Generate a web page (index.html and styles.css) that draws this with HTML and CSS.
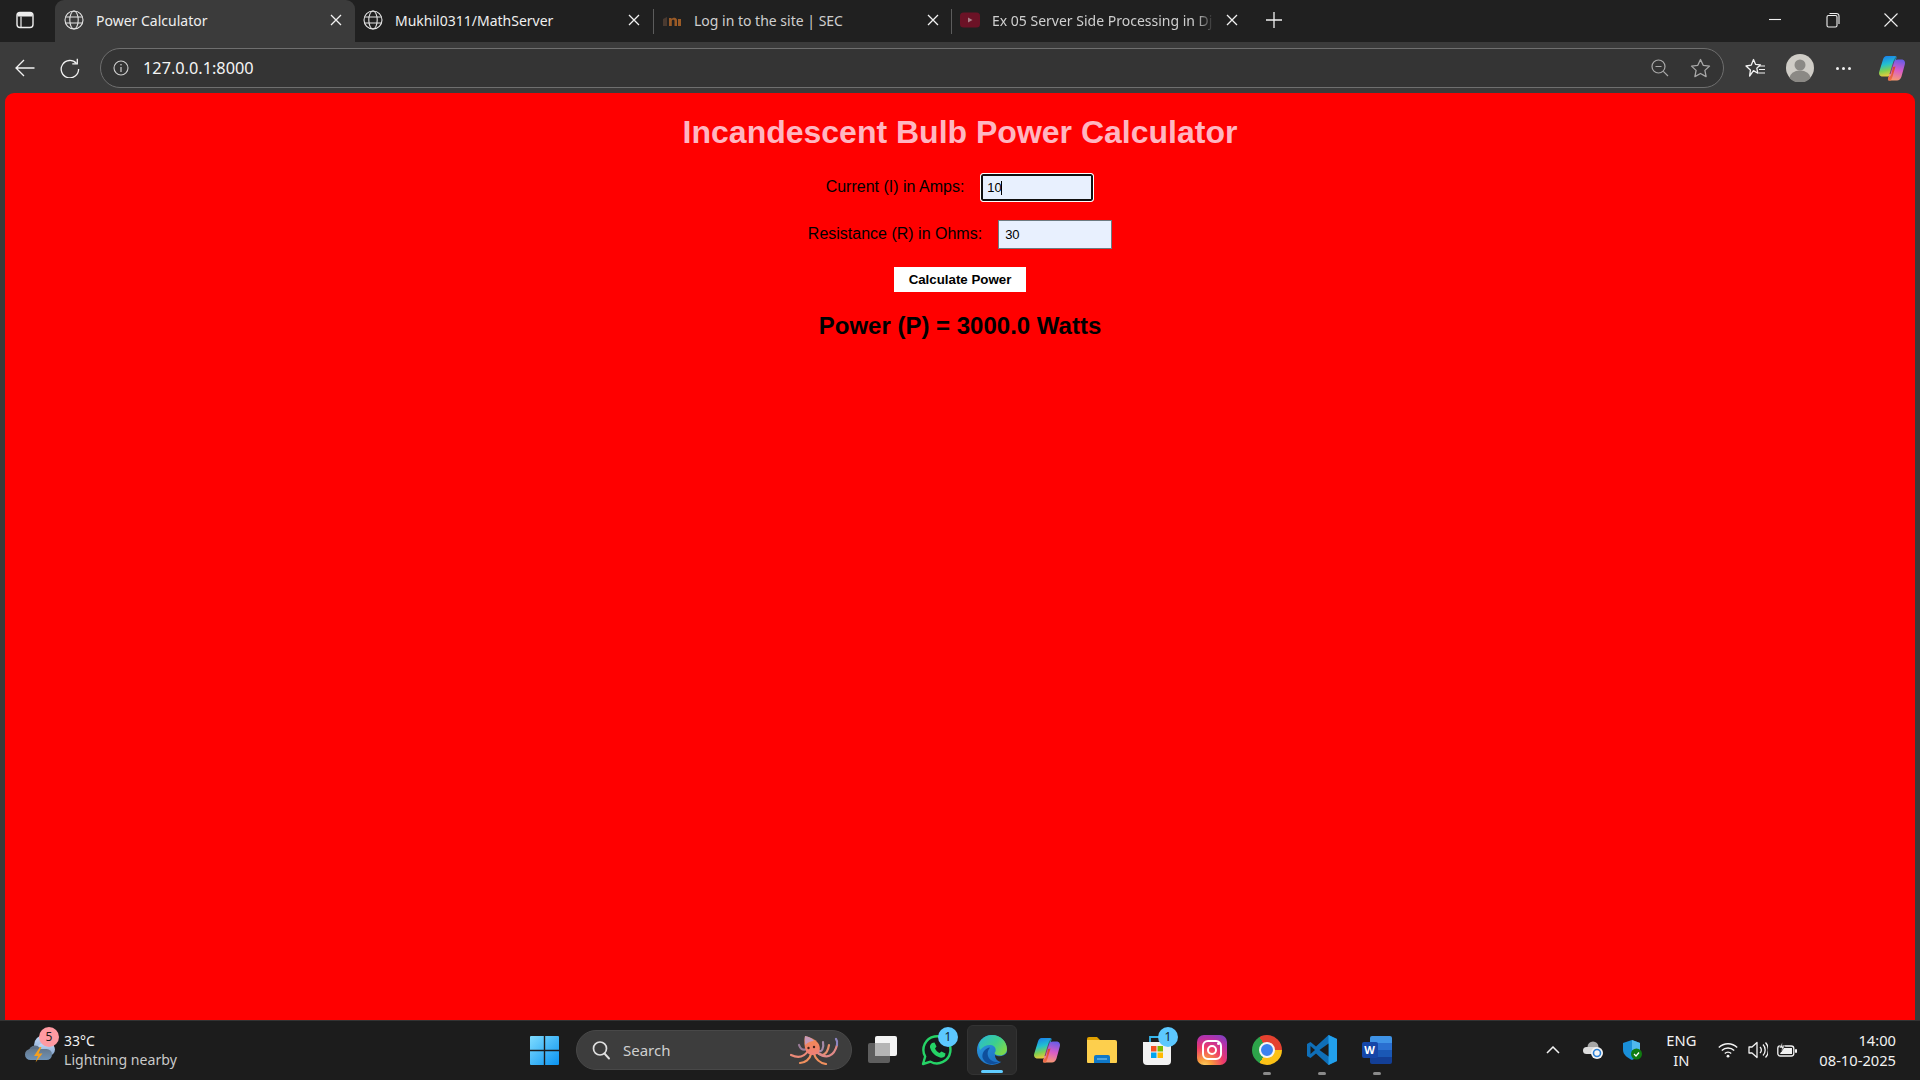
FILE: index.html
```html
<!DOCTYPE html>
<html lang="en">
<head>
  <meta charset="UTF-8">
  <title>Power Calculator</title>
  <link rel="stylesheet" href="styles.css">
</head>
<body>
  <svg class="defs" width="0" height="0">
    <defs>
      <linearGradient id="cp1" x1="0.3" y1="0" x2="0.5" y2="1"><stop offset="0" stop-color="#1a7fec"/><stop offset=".4" stop-color="#22c0d0"/><stop offset=".7" stop-color="#7fd050"/><stop offset="1" stop-color="#f6c83a"/></linearGradient>
      <linearGradient id="cp2" x1="0.6" y1="0" x2="0.4" y2="1"><stop offset="0" stop-color="#6a5ce6"/><stop offset=".5" stop-color="#d85cc8"/><stop offset="1" stop-color="#f89a70"/></linearGradient>
      <linearGradient id="cp3" x1="0" y1="0" x2="0" y2="1"><stop offset="0" stop-color="#d8402f"/><stop offset="1" stop-color="#f0704a"/></linearGradient>
    </defs>
    <symbol id="globe" viewBox="0 0 20 20">
      <g fill="none" stroke="#e4e4e4" stroke-width="1.1">
        <circle cx="10" cy="10" r="9"/>
        <ellipse cx="10" cy="10" rx="4.2" ry="9"/>
        <path d="M1.6 7h16.800M1.600 13h16.800"/>
      </g>
    </symbol>
    <symbol id="close" viewBox="0 0 12 12">
      <path d="M1 1l10 10M11 1L1 11" fill="none" stroke="#f2f2f2" stroke-width="1.3"/>
    </symbol>
    <symbol id="copilot-mark" viewBox="0 0 28 28">
      <path d="M8.500 2H17c1.200 0 1.800.8 1.500 1.800L14 19c-.8 2.500-2.500 3.500-4.500 3.500h-5C1.800 22.500.4 20.300 1.300 17.500L5 5.500C5.700 3.200 6.800 2 8.500 2z" fill="url(#cp1)"/>
      <path d="M20 5.500h3.500c2.700 0 4.100 2.200 3.300 5L23.500 22.500C22.700 25 21 26.500 19 26.500H11.500c-1.200 0-1.800-.8-1.500-1.800L15 9c.8-2.500 2.800-3.500 5-3.500z" fill="url(#cp2)"/>
      <path d="M15 13l2.500-.5-2.500 8.500c-.7 2.500-1.500 4-2 5.500h-1.500c-1.200 0-1.800-.8-1.500-1.800l.5-1.700c1.500-.2 2.400-1.200 2.900-2.800z" fill="url(#cp3)"/>
      <path d="M17.800 3.500l-1.800 3.500-4 13" fill="none" stroke="#2a2a2a" stroke-opacity=".55" stroke-width="1"/>
    </symbol>
  </svg>

  <div class="tabstrip">
    <div class="sidebtn">
      <svg width="18" height="18" viewBox="0 0 18 18"><rect x="1" y="1.500" width="16" height="15" rx="3" fill="none" stroke="#eee" stroke-width="1.400"/><path d="M1.500 5.500V4a2.500 2.500 0 0 1 2.500-2.500h10A2.500 2.500 0 0 1 16.500 4v1.500z" fill="#eee"/><path d="M5 5.500v11" stroke="#eee" stroke-width="1.200"/></svg>
    </div>
    <div class="tab tab-active">
      <svg class="favicon" width="20" height="20"><use href="#globe"/></svg>
      <span class="tab-title">Power Calculator</span>
      <svg class="tab-close" width="12" height="12"><use href="#close"/></svg>
    </div>
    <div class="tab tab-second">
      <svg class="favicon" width="20" height="20"><use href="#globe"/></svg>
      <span class="tab-title">Mukhil0311/MathServer</span>
      <svg class="tab-close" width="12" height="12"><use href="#close"/></svg>
    </div>
    <div class="tab tab-sep">
      <svg class="favicon" width="20" height="20" viewBox="0 0 20 20"><path d="M1 9l4-2v9H1z" fill="#4a3a30"/><path d="M7 16V8h2.500v1.200C10.500 8 12 7.500 13.500 8c1 .4 1.500 1.300 1.500 2.500V16h-2.500v-5c0-.8-.5-1.200-1.200-1.200S9.800 10.200 9.800 11v5z" fill="#9a5a26"/><path d="M16 9h3v7h-3z" fill="#9a5a26"/></svg>
      <span class="tab-title tab-dim">Log in to the site | SEC</span>
      <svg class="tab-close" width="12" height="12"><use href="#close"/></svg>
    </div>
    <div class="tab tab-sep tab-last">
      <svg class="favicon" width="20" height="20" viewBox="0 0 20 20"><rect y="2.500" width="20" height="15" rx="3.500" fill="#6b1226"/><path d="M8 7.500l4.500 2.500L8 12.500z" fill="#a88088"/></svg>
      <span class="tab-title tab-dim tab-fade">Ex 05 Server Side Processing in Dj</span>
      <svg class="tab-close" width="12" height="12"><use href="#close"/></svg>
    </div>
    <div class="newtab">
      <svg width="18" height="18" viewBox="0 0 18 18"><path d="M9 1v16M1 9h16" stroke="#f0f0f0" stroke-width="1.300" fill="none"/></svg>
    </div>
    <div class="winctrls">
      <svg width="14" height="14" viewBox="0 0 14 14"><path d="M1 6.500h12" stroke="#f0f0f0" stroke-width="1.100"/></svg>
      <svg width="14" height="16" viewBox="0 0 14 16"><rect x="1" y="3.500" width="10" height="11.500" rx="1.500" fill="none" stroke="#f0f0f0" stroke-width="1.100"/><path d="M3.500 1.500h7a2.500 2.500 0 0 1 2.500 2.500v8" fill="none" stroke="#f0f0f0" stroke-width="1.100"/></svg>
      <svg width="14" height="14" viewBox="0 0 14 14"><path d="M.5 .5l13 13M13.500 .5l-13 13" stroke="#f0f0f0" stroke-width="1.100"/></svg>
    </div>
  </div>

  <div class="toolbar">
    <svg class="tool-back" width="20" height="18" viewBox="0 0 20 18"><path d="M19.500 9H1M9 1L1 9l8 8" fill="none" stroke="#f2f2f2" stroke-width="1.300"/></svg>
    <svg class="tool-reload" width="20" height="20" viewBox="0 0 20 20"><path d="M16.500 5.500A8.700 8.700 0 1 0 18.600 11" fill="none" stroke="#f2f2f2" stroke-width="1.300"/><path d="M17.300 .8v5h-5" fill="none" stroke="#f2f2f2" stroke-width="1.300"/></svg>
    <div class="address">
      <svg class="addr-info" width="16" height="16" viewBox="0 0 16 16"><circle cx="8" cy="8" r="7" fill="none" stroke="#cfcfcf" stroke-width="1.100"/><path d="M8 7v5" stroke="#cfcfcf" stroke-width="1.200"/><circle cx="8" cy="4.700" r=".8" fill="#cfcfcf"/></svg>
      <span class="url">127.0.0.1:8000</span>
      <svg class="addr-zoom" width="18" height="18" viewBox="0 0 18 18"><circle cx="7.500" cy="7.500" r="6.500" fill="none" stroke="#a8a8a8" stroke-width="1.200"/><path d="M4.500 7.500h6M12.300 12.300L17 17" stroke="#a8a8a8" stroke-width="1.200"/></svg>
      <svg class="addr-star" width="21" height="20" viewBox="0 0 21 20"><path d="M10.500 1.500l2.700 5.800 6.300.8-4.600 4.300 1.200 6.200-5.600-3.100-5.600 3.100 1.200-6.200L1.500 8.100l6.300-.8z" fill="none" stroke="#a8a8a8" stroke-width="1.300" stroke-linejoin="round"/></svg>
    </div>
    <svg class="tool-fav" width="21" height="20" viewBox="0 0 21 20"><path d="M8.500 1.500l2 4.800 5 .5-3.700 3.400 1 5-4.300-2.600L4.600 18l.8-5.900L1 8l5.300-.9z" fill="none" stroke="#f2f2f2" stroke-width="1.300" stroke-linejoin="round"/><path d="M14 8h6M14 11.500h6M13.500 15h6.500" stroke="#f2f2f2" stroke-width="1.200"/></svg>
    <div class="avatar">
      <svg width="28" height="28" viewBox="0 0 28 28"><circle cx="14" cy="14" r="14" fill="#cfccc6"/><circle cx="14" cy="11" r="5.500" fill="#8b8985"/><path d="M3.500 24a10.500 7.500 0 0 1 21 0 14 14 0 0 1-21 0z" fill="#8b8985"/></svg>
    </div>
    <div class="dots"><i></i><i></i><i></i></div>
    <svg class="copilot" width="28" height="28"><use href="#copilot-mark"/></svg>
  </div>

  <div class="page">
    <h1 class="title">Incandescent Bulb Power Calculator</h1>
    <form class="calc" onsubmit="return false">
      <div class="row">
        <label class="field-label" for="current">Current (I) in Amps:</label>
        <div class="field-wrap">
          <input class="field field-focus" id="current" type="text" value="10">
          <i class="caret"></i>
        </div>
      </div>
      <div class="row">
        <label class="field-label" for="resistance">Resistance (R) in Ohms:</label>
        <div class="field-wrap">
          <input class="field" id="resistance" type="text" value="30">
        </div>
      </div>
      <button class="calc-btn" type="button">Calculate Power</button>
    </form>
    <h2 class="result">Power (P) = 3000.0 Watts</h2>
  </div>

  <div class="taskbar">
    <div class="tb-left">
      <div class="weather-icon">
        <svg width="32" height="32" viewBox="0 0 32 32">
          <defs>
            <linearGradient id="cl" x1="0" y1="0" x2="0" y2="1"><stop offset="0" stop-color="#c4dcfa"/><stop offset="1" stop-color="#7f9fc8"/></linearGradient>
            <linearGradient id="cl2" x1="0" y1="0" x2="0" y2="1"><stop offset="0" stop-color="#64788c"/><stop offset="1" stop-color="#6f93b8"/></linearGradient>
          </defs>
          <circle cx="20" cy="11" r="10" fill="url(#cl)"/>
          <rect x="13" y="9" width="18" height="13" rx="6.500" fill="url(#cl)"/>
          <circle cx="11" cy="18" r="6.500" fill="#5d7188"/>
          <rect x="1" y="15" width="27" height="11" rx="5.500" fill="url(#cl2)"/>
          <path d="M16 13l-6 9h4l-2.500 6.500 7-9h-4l3-6.500z" fill="#f5a01f"/>
        </svg>
        <span class="weather-badge">5</span>
      </div>
      <div class="weather-text">
        <div class="temp">33°C</div>
        <div class="cond">Lightning nearby</div>
      </div>
    </div>
    <div class="tb-start">
      <svg width="29" height="29" viewBox="0 0 29 29">
        <defs><linearGradient id="win" x1="0" y1="0" x2="1" y2="1"><stop offset="0" stop-color="#7fdcff"/><stop offset="1" stop-color="#0a93f0"/></linearGradient></defs>
        <path d="M1 0h12.800v13.800H0V1a1 1 0 0 1 1-1zM15.200 0H28a1 1 0 0 1 1 1v12.800H15.200zM0 15.200h13.800V29H1a1 1 0 0 1-1-1zM15.200 15.200H29V28a1 1 0 0 1-1 1H15.200z" fill="url(#win)"/>
      </svg>
    </div>
    <div class="search">
      <svg width="18" height="20" viewBox="0 0 18 20"><circle cx="8" cy="8.500" r="6.500" fill="none" stroke="#e0e0e0" stroke-width="1.700"/><path d="M12.500 13.500l4.500 5" stroke="#e0e0e0" stroke-width="1.900" stroke-linecap="round"/></svg>
      <span class="search-text">Search</span>
      <svg class="octopus" width="50" height="30" viewBox="0 0 50 30">
        <defs>
          <linearGradient id="oc" x1="0" y1="0" x2="0" y2="1"><stop offset="0" stop-color="#f28a4a"/><stop offset="1" stop-color="#ee7f7a"/></linearGradient>
        </defs>
        <g fill="none" stroke-linecap="round" stroke-width="2.200">
          <path d="M18 16C14 22 9 24 1 20" stroke="#ec8a78"/>
          <path d="M17 14C12 16 10 13 9 10" stroke="#9a7c98"/>
          <path d="M21 19C20 24 15 28 10 28" stroke="#f0905e"/>
          <path d="M24 19C26 25 30 28 36 29" stroke="#f0905e"/>
          <path d="M27 17C31 22 37 21 39 10" stroke="#e8906e"/>
          <path d="M28 15C32 19 34 12 33 7" stroke="#a58aa8"/>
          <path d="M28 18C36 24 44 22 47 10" stroke="#e08a88"/>
          <path d="M47 10C47.500 8 47.500 6 46 4" stroke="#8d86c0"/>
        </g>
        <path d="M15 1c5 1 10 3 13 7 3 4 2 9-1 11-4 2-9 1-11-3-2-5-2-10-1-15z" fill="url(#oc)"/>
        <path d="M15 1c4 1 7 2 9 5-3 0-6 1-8.500 4-.7-3-1-6-.5-9z" fill="#c69ab8"/>
        <circle cx="18.500" cy="13" r="1.200" fill="#40221a"/><circle cx="24" cy="12" r="1.200" fill="#40221a"/>
      </svg>
    </div>
    <div class="tb-apps">
      <div class="app">
        <svg width="30" height="30" viewBox="0 0 30 30"><rect x="1" y="8" width="22" height="20" rx="2" fill="#5e5e5e"/><rect x="8" y="1" width="22" height="20" rx="2" fill="#f4f4f4"/><path d="M8 8h15v13H8z" fill="#b5b5b5"/></svg>
      </div>
      <div class="app">
        <svg width="32" height="32" viewBox="0 0 32 32"><path d="M2 30l2.200-7.500A13.500 13.500 0 1 1 9.500 27.700z" fill="#16181a" stroke="#25d366" stroke-width="2.400" stroke-linejoin="round"/><path d="M11 9l2.500-.5 2 4-1.500 2c1 2 2.500 3.500 4.500 4.500l2-1.500 4 2-.5 2.500c-1 1.500-3 2-5 1.500-5-1.500-8.500-5-10-10-.3-1.500.6-3.500 2-4.500z" fill="#25d366"/></svg>
        <span class="app-badge">1</span>
      </div>
      <div class="app app-active">
        <svg width="32" height="32" viewBox="0 0 32 32">
          <defs>
            <linearGradient id="ed1" x1="0" y1="0" x2="1" y2="0.6"><stop offset="0" stop-color="#2ab8d8"/><stop offset=".6" stop-color="#3ccf8e"/><stop offset="1" stop-color="#7ad84e"/></linearGradient>
            <linearGradient id="ed2" x1="0" y1="0" x2="0.7" y2="1"><stop offset="0" stop-color="#2f9fe4"/><stop offset="1" stop-color="#1a6cc0"/></linearGradient>
          </defs>
          <circle cx="16" cy="16" r="15" fill="url(#ed2)"/>
          <path d="M31.500 18c-3.500 5-9.500 5-12.500 3 0 4 3 7 7 7 3-2.500 5-6 5.500-10z" fill="#2a2a2a"/>
          <path d="M11 14.500c-3 1.500-5 5-4.500 9 1 3 4 6 8 6.500 3 .2 6-.5 8-2-4 .6-9-1.500-10.500-6-.8-2.500-.5-5.500 2-8.500-1 0-2 .3-3 1z" fill="#0f4f9c"/>
          <path d="M5 6C8.500 2.500 12 1 16 1c8.500 0 15 6.500 15 14 0 4-3 6.500-7 6.500-3 0-5.500-1-5.500-2.500 2-1.500 2-7-3.500-8C11 10.500 7 12.500 4 16 2.500 12.500 3 8.500 5 6z" fill="url(#ed1)"/>
        </svg>
      </div>
      <div class="app">
        <svg width="28" height="28"><use href="#copilot-mark"/></svg>
      </div>
      <div class="app">
        <svg width="30" height="28" viewBox="0 0 30 28"><path d="M0 3a2 2 0 0 1 2-2h8l3 3h-13z" fill="#e0a000"/><path d="M0 4h28a2 2 0 0 1 2 2v20a1 1 0 0 1-1 1H1a1 1 0 0 1-1-1z" fill="#fdcf4d"/><path d="M7 21a2 2 0 0 1 2-2h12a2 2 0 0 1 2 2v6H7z" fill="#0f78c8"/><path d="M10 23h10" stroke="#7cc4ef" stroke-width="1.200"/></svg>
      </div>
      <div class="app">
        <svg width="30" height="32" viewBox="0 0 30 32"><path d="M8 8V3h14v5" fill="none" stroke="#36b4ea" stroke-width="1.800"/><path d="M1 8h28v19a4 4 0 0 1-4 4H5a4 4 0 0 1-4-4z" fill="#f2f2f2"/><rect x="9" y="12" width="5.500" height="5.500" fill="#f25022"/><rect x="15.500" y="12" width="5.500" height="5.500" fill="#7fba00"/><rect x="9" y="18.500" width="5.500" height="5.500" fill="#00a4ef"/><rect x="15.500" y="18.500" width="5.500" height="5.500" fill="#ffb900"/></svg>
        <span class="app-badge">1</span>
      </div>
      <div class="app">
        <div class="insta"><div class="insta-ring"></div><i class="insta-dot"></i></div>
      </div>
      <div class="app app-open">
        <div class="chrome"><div class="chrome-eye"></div></div>
      </div>
      <div class="app app-open">
        <svg width="30" height="30" viewBox="0 0 30 30"><path d="M21.500 0L30 4v22l-8.500 4L9 18.500 3.500 23 0 21V9l3.500-2L9 11.500z" fill="#0f6fb8"/><path d="M21.500 0L30 4v22l-8.500 4z" fill="#22a0ec"/><path d="M21.500 8.500L12.500 15l9 6.500z" fill="#1c1c1c"/><path d="M3.500 11l4.500 4-4.500 4z" fill="#1c1c1c"/></svg>
      </div>
      <div class="app app-open">
        <div class="word">
          <div class="word-sheet"><i></i><i></i><i></i><i></i></div>
          <div class="word-w">W</div>
        </div>
      </div>
    </div>
    <div class="tb-tray">
      <svg class="tray-chevron" width="14" height="8" viewBox="0 0 14 8"><path d="M1 7l6-6 6 6" fill="none" stroke="#f2f2f2" stroke-width="1.500"/></svg>
      <svg class="tray-cloud" width="20" height="18" viewBox="0 0 20 18"><circle cx="10" cy="6" r="5.500" fill="#a6a6a6"/><rect y="6" width="15" height="7" rx="3.500" fill="#dcdcdc"/><circle cx="14" cy="12" r="6" fill="#f4f4f4"/><circle cx="14" cy="12" r="3.500" fill="none" stroke="#2a7fd5" stroke-width="1.600"/></svg>
      <svg class="tray-shield" width="20" height="20" viewBox="0 0 20 20"><path d="M9 0l8 3v7c0 5-4 8-8 10-4-2-9-5-9-10V3z" fill="#1a8fd8"/><path d="M9 0l8 3v7H9z" fill="#4fb8ee"/><circle cx="13.500" cy="14" r="5.500" fill="#107c10"/><path d="M11 14l2 2 3-3.500" fill="none" stroke="#fff" stroke-width="1.200"/></svg>
      <div class="lang">ENG<br>IN</div>
      <svg class="tray-wifi" width="20" height="16" viewBox="0 0 20 16"><g fill="none" stroke="#f2f2f2" stroke-width="1.400"><path d="M.8 5.500a13 13 0 0 1 18.400 0"/><path d="M3.800 8.500a8.800 8.800 0 0 1 12.400 0"/><path d="M6.800 11.500a4.500 4.500 0 0 1 6.400 0"/></g><circle cx="10" cy="14.200" r="1.400" fill="#f2f2f2"/></svg>
      <svg class="tray-vol" width="20" height="18" viewBox="0 0 20 18"><g fill="none" stroke="#f2f2f2" stroke-width="1.300"><path d="M1 6h3l5-4.500v15L4 12H1z" stroke-linejoin="round"/><path d="M12 6a4 4 0 0 1 0 6"/><path d="M15 3.500a8 8 0 0 1 0 11"/><path d="M17.500 1.500a11 11 0 0 1 0 15"/></g></svg>
      <svg class="tray-batt" width="20" height="16" viewBox="0 0 20 16"><rect x=".8" y="4" width="16" height="10" rx="2.500" fill="none" stroke="#f2f2f2" stroke-width="1.300"/><path d="M3 12L6 6h9v6z" fill="#f2f2f2"/><rect x="18" y="7" width="2" height="4" rx="1" fill="#f2f2f2"/><path d="M5.500 0L2 6h3l-1 4 4-6H5z" fill="#f2f2f2" stroke="#1c1c1c" stroke-width=".6"/></svg>
      <div class="clock">14:00<br>08-10-2025</div>
    </div>
  </div>
</body>
</html>
```
FILE: styles.css
```css
html, body {
  margin: 0;
  padding: 0;
}
body {
  width: 1920px;
  height: 1080px;
  overflow: hidden;
  display: flex;
  flex-direction: column;
  background: #3b3b3b;
  font-family: "Noto Sans", "Liberation Sans", sans-serif;
}
.defs {
  position: absolute;
}

/* tabs */
.tabstrip {
  height: 42px;
  flex: none;
  display: flex;
  align-items: center;
  background: #202020;
}
.sidebtn {
  width: 55px;
  height: 42px;
  flex: none;
  display: flex;
  align-items: center;
  padding-left: 16px;
  padding-bottom: 2px;
  box-sizing: border-box;
}
.tab {
  width: 298px;
  height: 42px;
  flex: none;
  display: flex;
  align-items: center;
  position: relative;
  box-sizing: border-box;
  padding-left: 8px;
  padding-bottom: 2px;
  color: #efefef;
  font-size: 14px;
}
.tab-active {
  width: 300px;
  padding-left: 9px;
  background: #3b3b3b;
  border-radius: 9px 9px 0 0;
}
.tab-sep {
  padding-left: 9px;
}
.tab-sep::before {
  content: "";
  position: absolute;
  left: 0;
  top: 9px;
  height: 25px;
  width: 1px;
  background: #5c5c5c;
}
.tab-last {
  width: 299px;
}
.favicon {
  flex: none;
  margin-right: 12px;
}
.tab-title {
  width: 187px;
  white-space: nowrap;
  overflow: hidden;
}
.tab-active .tab-title,
.tab-second .tab-title {
  width: 210px;
}
.tab-dim {
  color: #cfcfcf;
  width: 219px;
}
.tab-fade {
  width: 222px;
  -webkit-mask-image: linear-gradient(to right, #000 92%, transparent);
  mask-image: linear-gradient(to right, #000 92%, transparent);
}
.tab-close {
  position: absolute;
  right: 13px;
  top: 14px;
}
.tab-sep .tab-close {
  right: 12px;
}
.newtab {
  width: 44px;
  flex: none;
  display: flex;
  justify-content: center;
  margin-left: 2px;
  margin-bottom: 2px;
}
.winctrls {
  margin-left: auto;
  margin-bottom: 2px;
  width: 152px;
  display: flex;
  justify-content: space-between;
  align-items: center;
  padding-right: 22px;
  box-sizing: border-box;
}

/* toolbar */
.toolbar {
  height: 51px;
  flex: none;
  display: flex;
  align-items: center;
  background: #3b3b3b;
  box-sizing: border-box;
  padding-left: 15px;
  padding-top: 1px;
}
.tool-back {
  flex: none;
  margin-right: 25px;
}
.tool-reload {
  flex: none;
  margin-right: 20px;
}
.address {
  width: 1624px;
  height: 40px;
  flex: none;
  display: flex;
  align-items: center;
  box-sizing: border-box;
  border: 1px solid #6f6f6f;
  border-radius: 20px;
  background: #343434;
  padding-left: 12px;
  padding-right: 12px;
}
.addr-info {
  margin-right: 14px;
}
.url {
  color: #f4f4f4;
  font-size: 16.3px;
}
.addr-zoom {
  margin-left: auto;
  margin-right: 21px;
}
.tool-fav {
  flex: none;
  margin-left: 21px;
}
.avatar {
  flex: none;
  margin-left: 20px;
  height: 28px;
}
.dots {
  flex: none;
  margin-left: 22px;
  display: flex;
  gap: 3px;
}
.dots i {
  width: 3px;
  height: 3px;
  background: #f0f0f0;
  border-radius: 50%;
}
.copilot {
  flex: none;
  margin-left: 27px;
}

/* page */
.page {
  height: 927px;
  flex: none;
  margin: 0 5px;
  background: #ff0000;
  border-radius: 9px 9px 0 0;
  font-family: "Liberation Sans", Arial, sans-serif;
  text-align: center;
  color: #000;
}
.title {
  margin: 0;
  padding-top: 21px;
  font-size: 32px;
  line-height: 37px;
  font-weight: bold;
  color: #ffb6c1;
}
.calc {
  margin-top: 22px;
}
.row {
  height: 29px;
  margin-bottom: 18px;
  display: flex;
  justify-content: center;
  align-items: center;
  gap: 16px;
  font-size: 16px;
}
.field-label {
  padding-bottom: 2px;
  color: #000;
}
.field-wrap {
  position: relative;
  height: 29px;
}
.field {
  display: block;
  width: 114px;
  height: 29px;
  box-sizing: border-box;
  padding: 0 6px;
  border: 1px solid #6d7a80;
  background: #e8f0fe;
  font-family: "Liberation Sans", Arial, sans-serif;
  font-size: 13px;
  color: #000;
  outline: none;
}
.field-focus {
  border: 1px solid #fff;
  border-radius: 3px;
  box-shadow: inset 0 0 0 2px #101010;
}
.caret {
  position: absolute;
  left: 21px;
  top: 8px;
  width: 1px;
  height: 14px;
  background: #000;
}
.calc-btn {
  display: block;
  margin: 0 auto;
  width: 132px;
  height: 25px;
  padding: 0;
  border: none;
  background: #fff;
  font-family: "Liberation Sans", Arial, sans-serif;
  font-size: 13.3px;
  font-weight: bold;
  color: #000;
}
.result {
  margin: 20px 0 0;
  font-size: 24px;
  line-height: 28px;
  font-weight: bold;
  color: #000;
}

/* taskbar */
.taskbar {
  height: 60px;
  flex: none;
  display: flex;
  align-items: center;
  background: #1c1c1c;
  border-top: 1px solid #333;
  padding-bottom: 1px;
  box-sizing: border-box;
  color: #f2f2f2;
}
.tb-left {
  width: 502px;
  flex: none;
  display: flex;
  align-items: center;
  box-sizing: border-box;
  padding-left: 24px;
}
.weather-icon {
  position: relative;
  width: 32px;
  height: 32px;
  margin-right: 8px;
}
.weather-badge {
  position: absolute;
  left: 15px;
  top: -7px;
  width: 20px;
  height: 20px;
  border-radius: 50%;
  background: #ff9aa2;
  color: #1a1a1a;
  font-size: 12px;
  line-height: 20px;
  text-align: center;
}
.temp {
  font-size: 14px;
  line-height: 19px;
}
.cond {
  font-size: 14.1px;
  line-height: 20px;
  color: #c9c9c9;
}
.tb-start {
  width: 74px;
  flex: none;
  display: flex;
  box-sizing: border-box;
  padding-left: 28px;
}
.search {
  width: 276px;
  height: 40px;
  flex: none;
  display: flex;
  align-items: center;
  box-sizing: border-box;
  padding-left: 15px;
  border-radius: 20px;
  background: #3d3d3d;
  border: 1px solid #484848;
}
.search-text {
  margin-left: 13px;
  font-size: 15px;
  color: #d0d0d0;
}
.octopus {
  margin-left: auto;
  margin-right: 11px;
}
.tb-apps {
  flex: none;
  display: flex;
  margin-left: 2px;
}
.app {
  width: 55px;
  height: 50px;
  flex: none;
  display: flex;
  align-items: center;
  justify-content: center;
  position: relative;
  box-sizing: border-box;
}
.app-badge {
  position: absolute;
  left: 29px;
  top: 2px;
  width: 20px;
  height: 20px;
  border-radius: 50%;
  background: #5cc8ff;
  color: #10222c;
  font-size: 12px;
  line-height: 20px;
  text-align: center;
}
.app-active {
  background: #2a2a2a;
  border: 1px solid #333;
  border-radius: 6px;
  width: 50px;
  margin: 0 2.5px;
}
.app-active::after {
  content: "";
  position: absolute;
  left: 13px;
  bottom: 1px;
  width: 22px;
  height: 3px;
  border-radius: 2px;
  background: #60cdff;
}
.app-open::after {
  content: "";
  position: absolute;
  left: 24px;
  bottom: 0;
  width: 8px;
  height: 3px;
  border-radius: 2px;
  background: #8a8a8a;
}
.insta {
  width: 30px;
  height: 30px;
  position: relative;
  border-radius: 7px;
  display: flex;
  align-items: center;
  justify-content: center;
  background: radial-gradient(circle at 25% 105%, #fdd56a 0, #f9a03c 18%, #ee3a6a 50%, #b830a8 75%, #6a48c8 100%);
}
.insta-ring {
  width: 20px;
  height: 20px;
  box-sizing: border-box;
  border: 2px solid #fff;
  border-radius: 6px;
  position: relative;
}
.insta-ring::after {
  content: "";
  position: absolute;
  left: 3px;
  top: 3px;
  width: 10px;
  height: 10px;
  box-sizing: border-box;
  border: 2px solid #fff;
  border-radius: 50%;
}
.insta-dot {
  position: absolute;
  right: 7px;
  top: 7px;
  width: 3px;
  height: 3px;
  border-radius: 50%;
  background: #fff;
}
.chrome {
  width: 30px;
  height: 30px;
  border-radius: 50%;
  display: flex;
  align-items: center;
  justify-content: center;
  background: conic-gradient(from 330deg, #e5412f 0 120deg, #fbc116 120deg 240deg, #2da44a 240deg 360deg);
}
.chrome-eye {
  width: 16px;
  height: 16px;
  box-sizing: border-box;
  border: 2px solid #f4f4f4;
  border-radius: 50%;
  background: #3b82f0;
}
.word {
  width: 30px;
  height: 28px;
  position: relative;
}
.word-sheet {
  position: absolute;
  right: 0;
  top: 0;
  width: 22px;
  height: 28px;
  display: flex;
  flex-direction: column;
  border-radius: 2px;
  overflow: hidden;
}
.word-sheet i {
  flex: 1;
}
.word-sheet i:nth-child(1) { background: #3f93e6; }
.word-sheet i:nth-child(2) { background: #2a6fd0; }
.word-sheet i:nth-child(3) { background: #1a58b5; }
.word-sheet i:nth-child(4) { background: #133f96; }
.word-w {
  position: absolute;
  left: 0;
  top: 6px;
  width: 16px;
  height: 16px;
  background: #1546a8;
  border-radius: 2px;
  color: #fff;
  font-size: 11px;
  line-height: 16px;
  font-weight: bold;
  text-align: center;
}
.tb-tray {
  margin-left: auto;
  flex: none;
  display: flex;
  align-items: center;
  padding-right: 24px;
}
.tray-chevron {
  margin-right: 23px;
}
.tray-cloud {
  margin-right: 20px;
}
.tray-shield {
  margin-right: 23px;
}
.lang {
  width: 30px;
  font-size: 14.7px;
  line-height: 20px;
  text-align: center;
  margin-right: 22px;
}
.tray-wifi {
  margin-right: 10px;
}
.tray-vol {
  margin-right: 9px;
}
.tray-batt {
  margin-right: 22px;
}
.clock {
  font-size: 14.7px;
  line-height: 20px;
  text-align: right;
}
```
